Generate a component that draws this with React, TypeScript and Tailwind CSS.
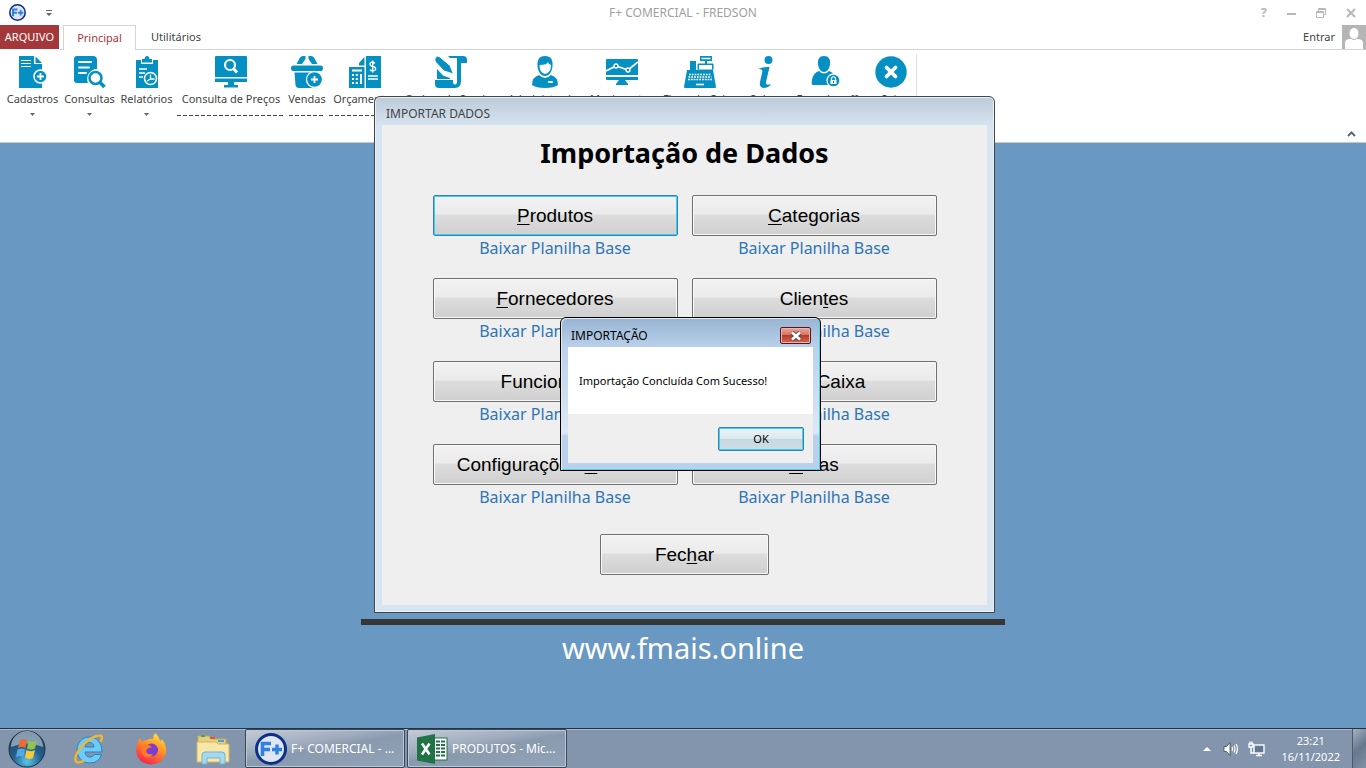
// src/App.tsx
import type { ReactNode } from "react";

const BLUE = "#0490c2";

/* ---------- Ribbon icons (32x32) ---------- */

function Icon({ children }: { children: ReactNode }) {
  return (
    <svg width="32" height="32" viewBox="0 0 32 32" fill={BLUE} aria-hidden="true">
      {children}
    </svg>
  );
}

const icons = {
  cadastros: (
    <Icon>
      <path d="M2 0H17V8H25V32H2Z" />
      <path d="M18.500 0.500L25 7H18.500Z" />
      <path d="M4 4.500H14M4 7.500H14M4 10.500H14" stroke="#fff" strokeWidth="1" />
      <circle cx="23.500" cy="20.500" r="6.500" stroke="#fff" strokeWidth="1.500" />
      <path d="M23.500 17V24M20 20.500H27" stroke="#fff" strokeWidth="1.800" />
    </Icon>
  ),
  consultas: (
    <Icon>
      <path d="M3 0H19Q23 0 23 4V13A10 10 0 0 0 14 27H3Q0 27 0 24V3Q0 0 3 0Z" />
      <path d="M5 6H17M5 11.500H15M5 17H12" stroke="#fff" strokeWidth="2" strokeLinecap="round" />
      <circle cx="21.500" cy="22" r="6" fill="#fff" stroke={BLUE} strokeWidth="2.500" />
      <path d="M26 26.500L30.500 31" stroke={BLUE} strokeWidth="3.500" />
    </Icon>
  ),
  relatorios: (
    <Icon>
      <path d="M5 4H10V8H22V4H27V32H5Z" />
      <path d="M11 3H13.500Q14 0 16 0Q18 0 18.500 3H21V6.500H11Z" />
      <path d="M8 13H16M8 17H14M8 21H12" stroke="#fff" strokeWidth="1.500" />
      <circle cx="19.500" cy="22.500" r="6" fill={BLUE} stroke="#fff" strokeWidth="1.600" />
      <path d="M19.500 18.500V23H23.500M19.500 23L16 25" stroke="#fff" strokeWidth="1.300" fill="none" />
    </Icon>
  ),
  precos: (
    <Icon>
      <path d="M1 0H31Q32 0 32 1V21H0V1Q0 0 1 0ZM0 22.500H32V26H0ZM13 26H19V29H23V31.500H9V29H13Z" />
      <circle cx="15" cy="9" r="5" fill="none" stroke="#fff" strokeWidth="2.200" />
      <path d="M18.500 12.500L22 16.500" stroke="#fff" strokeWidth="2.800" />
    </Icon>
  ),
  vendas: (
    <Icon>
      <path d="M5.500 8L9 1.500Q10 0 12 0H14.500V3L11 8ZM26.500 8L23 1.500Q22 0 20 0H17.500V3L21 8Z" />
      <path d="M2 9.500H30Q32 9.500 32 12Q32 15 30 15H2Q0 15 0 12Q0 9.500 2 9.500ZM3.500 16.500H28L27 29Q26 32 23 32H8Q5 32 4.500 29Z" />
      <circle cx="23.500" cy="23.500" r="8" stroke="#fff" strokeWidth="1.300" />
      <path d="M23.500 20V27M20 23.500H27" stroke="#fff" strokeWidth="1.800" />
    </Icon>
  ),
  orcamentos: (
    <Icon>
      <path d="M17 0H32V32H17ZM0 11H15.500V32H0ZM10 7L15.500 1V9.500H10Z" />
      <path d="M3 14.500H13" stroke="#fff" strokeWidth="2" />
      <path d="M3 19H9M3 23H9M3 27H9" stroke="#fff" strokeWidth="2" strokeDasharray="2 1.800" />
      <path d="M12 18V28" stroke="#fff" strokeWidth="2" />
      <path d="M26 7Q21.500 5 21 8Q21 10 24 10.500Q27 11 26.500 13.500Q25 16 21 14M23.700 4.500V16.500" fill="none" stroke="#fff" strokeWidth="1.400" />
      <path d="M19 20H29M19 23H29" stroke="#fff" strokeWidth="1.500" />
    </Icon>
  ),
  ordem: (
    <Icon>
      <path d="M13 0H28Q32 0 32 4V7H26V25Q26 32 20 32H4Q0 32 0 28V24H18V27Q20 30 22 27V2H15Z" />
      <path d="M2 13L8 19.500L15 22V23H2Z" />
      <path d="M0.500 1.500Q2.500 -1 5 1L15 9.500L18.500 18L9 15L0.500 6Q-1 3.500 0.500 1.500Z" stroke="#fff" strokeWidth="1" />
    </Icon>
  ),
  admin: (
    <Icon>
      <path d="M16 0C10 0 8 4 8.500 10C9 16 12 20 16 20C20 20 23 16 23.500 10C24 4 22 0 16 0Z" />
      <path d="M10.500 9Q18 9 19 6Q20 9 22 9Q22 17 16 18Q10.500 17 10.500 9Z" fill="#fff" />
      <path d="M10 19Q16 25 22 19Q29 21 29 29Q25 32 16 32Q7 32 3 29Q3 21 10 19Z" />
      <rect x="19" y="25" width="5" height="2" rx="1" fill="#fff" />
    </Icon>
  ),
  movimentos: (
    <Icon>
      <path d="M1 3H31Q32 3 32 4V19H0V4Q0 3 1 3ZM0 21H32V23.500Q32 24 31 24H1Q0 24 0 23ZM13 24H19L22 28V29H10V28Z" />
      <path d="M0 15L10 10L22 14L32 6" fill="none" stroke="#fff" strokeWidth="1.700" />
      <circle cx="10" cy="10" r="2" stroke="#fff" strokeWidth="1.300" />
      <circle cx="22" cy="14" r="2" stroke="#fff" strokeWidth="1.300" />
    </Icon>
  ),
  fluxo: (
    <Icon>
      <path d="M3 14H29L32 31Q32 32 31 32H1Q0 32 0 31ZM6 5H12V14H6ZM14 8H29V13H14ZM16 0H28V5H23V9H21V5H16Z" />
      <path d="M17.500 2.500H26.500" stroke="#fff" strokeWidth="1.500" />
      <path d="M15 11H28" stroke="#fff" strokeWidth="4" />
      <path d="M14 8H29V14H14Z" fill="none" stroke={BLUE} />
      <path d="M5 18.500H27M4.500 21H27.500M4 23.500H28" stroke="#fff" strokeWidth="1.500" strokeDasharray="1.800 1" />
      <path d="M12 28.500H20" stroke="#fff" strokeWidth="1.600" />
    </Icon>
  ),
  sobre: (
    <Icon>
      <circle cx="19.500" cy="4" r="4" />
      <path d="M9 13Q14 10.500 20.500 11L17 26Q16.500 30 22 28Q20 32 14 32Q10 31 11 26L13.500 15Q13 12.500 9 13Z" />
    </Icon>
  ),
  logoff: (
    <Icon>
      <path d="M13 0C8.500 0 6.500 3 7 8C7.500 13 10 16 13 16C16 16 18.500 13 19 8C19.500 3 17.500 0 13 0Z" />
      <path d="M8 15Q13 20 18 15Q23 17 24 20V29H2Q0 29 1 24Q2 17 8 15Z" />
      <circle cx="22.500" cy="24.500" r="6.500" stroke="#fff" strokeWidth="1.300" />
      <path d="M19.500 24H25.500V28H19.500Z" fill="#fff" />
      <path d="M20.500 24V22Q22.500 19.500 24.500 22V24" fill="none" stroke="#fff" strokeWidth="1.200" />
      <path d="M22.500 25V27" stroke={BLUE} />
    </Icon>
  ),
  sair: (
    <Icon>
      <circle cx="16" cy="16" r="15.700" />
      <path d="M11.500 11.500L20.500 20.500M20.500 11.500L11.500 20.500" stroke="#fff" strokeWidth="3.800" strokeLinecap="round" />
    </Icon>
  ),
};

const ribbonItems = [
  { label: "Cadastros", icon: icons.cadastros, width: "w-[57px]", menu: true },
  { label: "Consultas", icon: icons.consultas, width: "w-[57px]", menu: true },
  { label: "Relatórios", icon: icons.relatorios, width: "w-[57px]", menu: true },
  { label: "Consulta de Preços", icon: icons.precos, width: "w-[112px]" },
  { label: "Vendas", icon: icons.vendas, width: "w-[40px]" },
  { label: "Orçamentos", icon: icons.orcamentos, width: "w-[76px]" },
  { label: "Ordem de Serviço", icon: icons.ordem, width: "w-[96px]" },
  { label: "Administrador", icon: icons.admin, width: "w-[92px]" },
  { label: "Movimentos", icon: icons.movimentos, width: "w-[62px]" },
  { label: "Fluxo de Caixa", icon: icons.fluxo, width: "w-[94px]" },
  { label: "Sobre", icon: icons.sobre, width: "w-[36px]" },
  { label: "Fazer logoff", icon: icons.logoff, width: "w-[88px]" },
  { label: "Sair", icon: icons.sair, width: "w-[40px]" },
];

// "&" goes before the access key letter
const importOptions = [
  "&Produtos",
  "&Categorias",
  "&Fornecedores",
  "Clien&tes",
  "Funcionários",
  "Saldo Caixa",
  "Configurações &Sistema",
  "&Notas",
];

function AccessLabel({ text }: { text: string }) {
  const i = text.indexOf("&");
  if (i < 0) return <>{text}</>;
  return (
    <>
      {text.slice(0, i)}
      <span className="underline decoration-1 underline-offset-2">{text[i + 1]}</span>
      {text.slice(i + 2)}
    </>
  );
}

function FormButton({ text, focused, className }: { text: string; focused?: boolean; className: string }) {
  return (
    <button
      className={`${className} h-[41px] rounded-xs border bg-[linear-gradient(#f2f2f2,#ebebeb_47%,#dddddd_48%,#cfcfcf)] pt-0.5 font-['Liberation_Sans',Arial,sans-serif] text-[19px] text-black ${
        focused
          ? "border-[#3c7fb1] shadow-[inset_0_0_0_1px_#35d0f5]"
          : "border-[#707070] shadow-[inset_0_0_0_1px_#f8f8f8]"
      }`}
    >
      <AccessLabel text={text} />
    </button>
  );
}

function AppLogo({ size }: { size: number }) {
  return (
    <svg width={size} height={size} viewBox="0 0 32 32" aria-hidden="true">
      <circle cx="16" cy="16" r="14.500" fill="#dfe6f0" stroke="#0b2f8a" strokeWidth="3" />
      <path d="M7.500 23V10.500H16M7.500 16.500H15" fill="none" stroke="#2f80e4" strokeWidth="3.600" />
      <path d="M17 16.500H27M22 11.500V21.500" stroke="#2f80e4" strokeWidth="3.400" />
    </svg>
  );
}

function TitleBar() {
  return (
    <header className="grid h-[25px] grid-cols-[1fr_auto_1fr] items-center bg-white">
      <div className="flex items-center gap-5 pl-[9px]">
        <AppLogo size={17} />
        <button aria-label="Personalizar">
          <svg width="6" height="6" viewBox="0 0 6 6" fill="#666">
            <path d="M0 0H6V1H0ZM0 3H6L3 6Z" />
          </svg>
        </button>
      </div>
      <h1 className="text-[12px] text-[#a0a0a0]">F+ COMERCIAL - FREDSON</h1>
      <div className="flex items-center justify-end gap-5 pr-[10px] text-[#b8b8b8]">
        <button aria-label="Ajuda" className="text-[13px] font-bold leading-none">?</button>
        <button aria-label="Minimizar">
          <svg width="9" height="10" viewBox="0 0 9 10"><path d="M0 6H9" stroke="#b8b8b8" strokeWidth="2" /></svg>
        </button>
        <button aria-label="Restaurar">
          <svg width="10" height="10" viewBox="0 0 10 10" fill="none" stroke="#b8b8b8">
            <path d="M2.500 3V0.500H9.500V6.500H7M2 1.500H10" />
            <path d="M0.500 3.500H7.500V9.500H0.500ZM0 4.500H8" />
          </svg>
        </button>
        <button aria-label="Fechar janela">
          <svg width="10" height="10" viewBox="0 0 10 10"><path d="M1 1L9 9M9 1L1 9" stroke="#b8b8b8" strokeWidth="2" /></svg>
        </button>
      </div>
    </header>
  );
}

function Tabs() {
  return (
    <nav className="flex h-[25px] items-stretch bg-white text-[11px] text-[#444]">
      <button className="mb-px w-[59px] bg-[#a4373a] text-white">ARQUIVO</button>
      <span className="w-1 border-b border-[#d4d4d4]" />
      <button className="w-[73px] border border-b-0 border-[#d4d4d4] text-[#a4373a]">Principal</button>
      <button className="w-[80px] border-b border-[#d4d4d4]">Utilitários</button>
      <div className="flex flex-1 items-center justify-end gap-[7px] border-b border-[#d4d4d4]">
        <a href="#entrar">Entrar</a>
        <svg width="24" height="24" viewBox="0 0 24 24" aria-hidden="true">
          <rect width="24" height="24" fill="#b5b5b5" />
          <path d="M3 24V18Q3 14 8 14H15Q21 14 21 18V24Z" fill="#fff" />
          <ellipse cx="12" cy="8.500" rx="5" ry="6" fill="#fff" stroke="#b5b5b5" strokeWidth="1" />
        </svg>
      </div>
    </nav>
  );
}

function Ribbon() {
  return (
    <div className="flex h-[93px] items-start border-b border-[#c8c8c8] bg-white pl-1">
      {ribbonItems.map((item) => (
        <button key={item.label} className={`${item.width} mt-[6px] flex flex-col items-center text-[#444]`}>
          {item.icon}
          <span className="mt-[3px] text-[11px] leading-4 whitespace-nowrap">{item.label}</span>
          {item.menu ? (
            <svg className="mt-[6px]" width="5" height="3" viewBox="0 0 5 3" fill="#666"><path d="M0 0H5L2.500 3Z" /></svg>
          ) : (
            <span className="mt-2 h-px w-full border-x-2 border-transparent bg-[repeating-linear-gradient(90deg,#444_0_4px,transparent_4px_6px)] bg-clip-padding" />
          )}
        </button>
      ))}
      <span className="mt-1 ml-[5px] h-20 w-px bg-[#e1e1e1]" />
      <button aria-label="Recolher faixa" className="mr-[10px] mb-[5px] ml-auto self-end">
        <svg width="9" height="6" viewBox="0 0 9 6" fill="none" stroke="#666" strokeWidth="2"><path d="M1 5L4.500 1.500L8 5" /></svg>
      </button>
    </div>
  );
}

function ImportWindow() {
  return (
    <section className="absolute top-[96px] left-[374px] w-[621px] rounded-t-md border border-[#444] bg-[linear-gradient(#bccbd9,#d7e4f2_29px)] px-[7px] pb-[7px] shadow-[inset_0_0_0_1px_#e9f1f9]">
      <h2 className="flex h-7 items-center pt-[6px] pl-1 text-[12px] text-[#444]">IMPORTAR DADOS</h2>
      <div className="flex flex-col items-center bg-[#efefef] pt-2 pb-[30px]">
        <h3 className="mb-[22px] text-[27px] leading-10 font-bold text-black">Importação de Dados</h3>
        <div className="grid grid-cols-2 gap-x-[14px] gap-y-[17px]">
          {importOptions.map((text, i) => (
            <div key={text} className="flex flex-col items-center">
              <FormButton text={text} focused={i === 0} className="w-[245px]" />
              <a href="#planilha" className="text-[16px] leading-[25px] text-[#2e75b6]">Baixar Planilha Base</a>
            </div>
          ))}
        </div>
        <div className="mt-6">
          <FormButton text="Fec&har" className="w-[169px]" />
        </div>
      </div>
    </section>
  );
}

function MessageBox() {
  return (
    <section
      role="alertdialog"
      className="absolute top-[317px] left-[560px] w-[261px] rounded-t-md border border-black bg-[linear-gradient(#98b4d2,#b9d1ea_29px,#dde8f5_115px,#b9d1ea_118px)] px-[7px] pb-[7px] shadow-[inset_1px_1px_0_#e0ebf6,inset_-1px_-1px_0_#45d3f0]"
    >
      <div className="flex h-[29px] items-center justify-between pt-[6px] pr-[2px] pl-[3px]">
        <h2 className="text-[12px] text-black">IMPORTAÇÃO</h2>
        <button
          aria-label="Fechar"
          className="flex h-[17px] w-[31px] items-center justify-center rounded-xs border border-[#5a1420] bg-[linear-gradient(#e8a597,#d9705e_48%,#bd3a22_50%,#cf6a57)] shadow-[inset_0_0_0_1px_#eab5aa]"
        >
          <svg width="12" height="10" viewBox="0 0 12 10">
            <path d="M2 1.500L10 8.500M10 1.500L2 8.500" stroke="#4f4f5c" strokeWidth="4.500" />
            <path d="M2 1.500L10 8.500M10 1.500L2 8.500" stroke="#fff" strokeWidth="2.600" />
          </svg>
        </button>
      </div>
      <p className="bg-white py-[25px] pl-[11px] text-[11px] leading-[17px] text-black">
        Importação Concluída Com Sucesso!
      </p>
      <div className="flex justify-end bg-[#efefef] pt-[13px] pr-[9px] pb-3">
        <button className="h-6 w-[86px] rounded-xs border border-[#3c7fb1] bg-[linear-gradient(#eaf3f7,#dde9ef_48%,#c5d8e1_50%,#cddde4)] text-[11px] text-black shadow-[inset_0_0_0_1px_#3fd0f2]">
          OK
        </button>
      </div>
    </section>
  );
}

/* ---------- Taskbar ---------- */

function StartOrb() {
  return (
    <svg width="38" height="38" viewBox="0 0 38 38" aria-hidden="true">
      <defs>
        <radialGradient id="orb" cx="0.500" cy="0.850" r="0.800">
          <stop offset="0" stopColor="#57c6ee" />
          <stop offset="0.500" stopColor="#245f8c" />
          <stop offset="1" stopColor="#24445f" />
        </radialGradient>
      </defs>
      <circle cx="19" cy="19" r="18" fill="url(#orb)" stroke="#1d3146" />
      <path d="M3 17A16 16 0 0 1 35 17Q19 10 3 17Z" fill="#c3d3df" opacity="0.600" />
      <path d="M12 10Q15 8 19 10L17.500 18Q13.500 16 10 18Z" fill="#ef6a30" />
      <path d="M20.500 10.500Q24.500 13 29 10.500L27 18.500Q23 20.500 19 18.500Z" fill="#8fc54a" />
      <path d="M9.500 19.500Q13 17.500 17 19.500L15.500 27Q12 25 8 27Z" fill="#55a9e2" />
      <path d="M18.500 20Q22.500 22.500 27 20L25 28Q21 30 17 27.500Z" fill="#fbc936" />
    </svg>
  );
}

function IeIcon() {
  return (
    <svg width="32" height="32" viewBox="0 0 32 32" aria-hidden="true">
      <path
        fillRule="evenodd"
        d="M16.500 4C24 4 29 10 29 19H12Q12.500 24 17 24Q20 24 21.500 21.500H28.500Q26 30 17 30C9 30 4 24 4 17C4 10 9 4 16.500 4ZM12 14H21Q20.500 9.500 16.500 9.500Q12.500 9.500 12 14Z"
        fill="#6ecbf7"
        stroke="#2583c6"
        strokeWidth="1"
      />
      <path d="M27.500 9Q31 2 26.500 2.500Q19 3 10 12Q0 23 3 28.500Q5 31 11 27.500" fill="none" stroke="#f2b62f" strokeWidth="2.400" />
    </svg>
  );
}

function FirefoxIcon() {
  return (
    <svg width="32" height="32" viewBox="0 0 32 32" aria-hidden="true">
      <defs>
        <linearGradient id="fox" x1="0.800" y1="0" x2="0.300" y2="1">
          <stop offset="0" stopColor="#ffe63b" />
          <stop offset="0.450" stopColor="#ff9028" />
          <stop offset="1" stopColor="#f5214f" />
        </linearGradient>
      </defs>
      <path d="M20 0Q24 3 25 8Q27 7 27 6Q32 13 31 19Q29 31 16 31.500Q3 31 1 18Q1 11 5 5L7 9Q9 7 12 7Q15 5 18 6Q18 2 20 0Z" fill="url(#fox)" />
      <circle cx="16.500" cy="17" r="6.500" fill="#7a3fd0" />
      <path d="M7 13Q13 10 17 14Q12 15 11 18Q12 22 18 21Q15 26 10 24Q5 20 7 13Z" fill="#ff7a26" />
    </svg>
  );
}

function FolderIcon() {
  return (
    <svg width="34" height="32" viewBox="0 0 34 32" aria-hidden="true">
      <path d="M2 3H13L15 6H30V27H2Z" fill="#e8cf7d" stroke="#c9a94e" />
      <path d="M5 2H9V4H5Z" fill="#3dab47" />
      <path d="M14 4H19V6H14Z" fill="#e2553b" />
      <path d="M22 7H28V9H22Z" fill="#4aa0df" />
      <path d="M1 9H20L22 11H33V29H1Z" fill="#f7e7a8" stroke="#d3b763" />
      <path d="M6 31V22Q6 19 9 19H26Q29 19 29 22V31H24V25H11V31Z" fill="#a8d8ee" stroke="#6fb3d2" />
    </svg>
  );
}

function ExcelIcon() {
  return (
    <svg width="31" height="30" viewBox="0 0 31 30" aria-hidden="true">
      <rect x="15" y="4" width="15" height="22" fill="#fff" stroke="#217346" />
      <path d="M19 7.500H28M19 11H28M19 14.500H28M19 18H28M19 21.500H28" stroke="#217346" strokeWidth="2" strokeDasharray="4 1" />
      <path d="M0 3.500L18 0V30L0 26.500Z" fill="#217346" />
      <path d="M5 9.500L12.500 20.500M12.500 9.500L5 20.500" stroke="#fff" strokeWidth="2.600" />
    </svg>
  );
}

function TaskButton({ icon, label }: { icon: ReactNode; label: string }) {
  return (
    <button className="flex w-[160px] items-center gap-1 rounded-xs border border-[#3c4858] bg-[linear-gradient(170deg,#c3ccd8,#a0adbf_35%,#8999ae_50%,#93a3b8)] pl-[9px] text-[12px] text-white shadow-[inset_0_0_0_1px_#bcc7d4]">
      {icon}
      <span className="whitespace-nowrap">{label}</span>
    </button>
  );
}

function Taskbar() {
  return (
    <footer className="flex h-10 items-stretch border-t border-[#26323f] bg-[#8395ac] shadow-[inset_0_1px_0_#a9b8ca]">
      <button aria-label="Iniciar" className="flex w-[58px] items-center pl-2"><StartOrb /></button>
      <button aria-label="Internet Explorer" className="flex w-[62px] items-center justify-center"><IeIcon /></button>
      <button aria-label="Firefox" className="flex w-[62px] items-center justify-center"><FirefoxIcon /></button>
      <button aria-label="Windows Explorer" className="flex w-[62px] items-center justify-center"><FolderIcon /></button>
      <div className="flex gap-[2px] pl-px">
        <TaskButton icon={<AppLogo size={32} />} label="F+ COMERCIAL - ..." />
        <TaskButton icon={<ExcelIcon />} label="PRODUTOS - Mic..." />
      </div>
      <div className="ml-auto flex items-center text-white">
        <button aria-label="Mostrar ícones ocultos" className="mr-3">
          <svg width="8" height="4" viewBox="0 0 8 4" fill="#fff"><path d="M0 4H8L4 0Z" /></svg>
        </button>
        <svg className="mr-[9px]" width="16" height="16" viewBox="0 0 16 16" fill="none" stroke="#fff" strokeWidth="1.200">
          <path d="M1 5.500H3.500L7 1.500V14.500L3.500 10.500H1Z" fill="#fff" stroke="#3a4757" strokeWidth="0.800" />
          <path d="M9 6Q10 8 9 10M11 4.500Q13 8 11 11.500M13 3Q16 8 13 13" />
        </svg>
        <svg className="mr-4" width="17" height="16" viewBox="0 0 17 16" fill="none" stroke="#fff" strokeWidth="1.400">
          <rect x="6" y="4" width="10" height="8" fill="#66788f" />
          <path d="M8 14.500H14M11 12V14M1 3H5V6H1ZM2 0.500V3M4 0.500V3M3 6V12H6" />
        </svg>
        <time className="mr-3 text-center text-[11px] leading-4">
          23:21
          <br />
          16/11/2022
        </time>
        <button aria-label="Mostrar área de trabalho" className="w-[14px] self-stretch border-l border-[#4c5a6b] bg-[linear-gradient(135deg,#a3b0c0,#68788c_50%,#8190a3)]" />
      </div>
    </footer>
  );
}

export default function App() {
  return (
    <div className="relative flex min-h-screen flex-col overflow-hidden bg-[#6998c3] font-['Noto_Sans','Segoe_UI',sans-serif]">
      <TitleBar />
      <Tabs />
      <Ribbon />

      {/* Desktop */}
      <main className="flex flex-1 flex-col items-center justify-end pb-[58px]">
        <div className="h-[6px] w-[644px] bg-[#363636]" />
        <p className="text-[29px] leading-[45px] text-white">www.fmais.online</p>
        <ImportWindow />
        <MessageBox />
      </main>

      <Taskbar />
    </div>
  );
}
